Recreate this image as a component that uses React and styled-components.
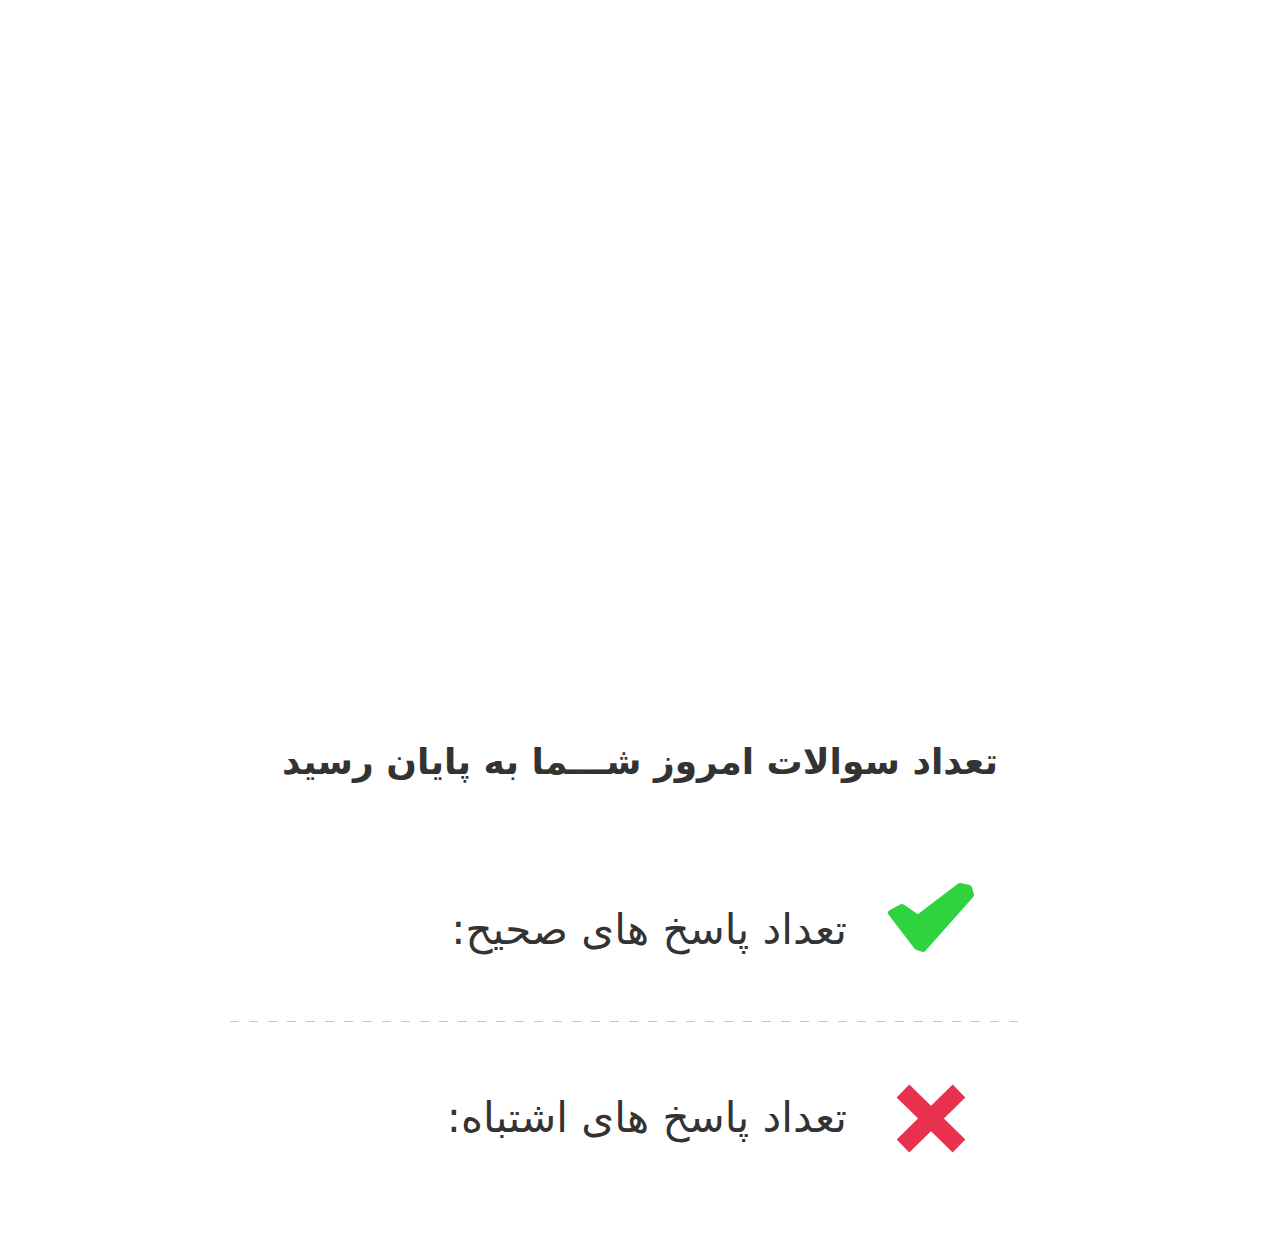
import React from "react";
import styled, { createGlobalStyle } from "styled-components";

const GlobalStyle = createGlobalStyle`
  html, body {
    margin: 0;
    padding: 0;
    background: #fff;
  }
  body {
    font-family: "DejaVu Sans", "Noto Sans", sans-serif;
    color: #333;
  }
`;

function CheckIcon() {
  return (
    <svg width="90" height="90" viewBox="0 0 90 90">
      <polygon
        points="6,33 17,27 33,38 75,6 84,8 86,15 38,69 32,67"
        fill="#2fd33e"
        stroke="#2fd33e"
        strokeWidth="6"
        strokeLinejoin="round"
      />
    </svg>
  );
}

function CrossIcon() {
  return (
    <svg width="90" height="90" viewBox="0 0 90 90">
      <g stroke="#e8304f" strokeWidth="18" strokeLinecap="butt">
        <line x1="18" y1="18" x2="74" y2="73" />
        <line x1="74" y1="18" x2="18" y2="73" />
      </g>
    </svg>
  );
}

function App() {
  const rows = [
    { label: "تعداد پاسخ های صحیح:", icon: <CheckIcon />, shift: 10 },
    { label: "تعداد پاسخ های اشتباه:", icon: <CrossIcon />, shift: 0 },
  ];

  return (
    <Page>
      <GlobalStyle />
      <Title>تعداد سوالات امروز شـــما به پایان رسید</Title>
      <Result>
        {rows.map((row, i) => (
          <React.Fragment key={i}>
            {i > 0 && <Divider />}
            <Row>
              <IconBox>{row.icon}</IconBox>
              <Label $shift={row.shift}>{row.label}</Label>
            </Row>
          </React.Fragment>
        ))}
      </Result>
    </Page>
  );
}

const Page = styled.div`
  width: 1280px;
  min-height: 1260px;
  padding-top: 732px;
  box-sizing: border-box;
  display: flex;
  flex-direction: column;
`;

const Title = styled.h1`
  margin: 0;
  direction: rtl;
  text-align: center;
  font-size: 36px;
  font-weight: bold;
  line-height: 60px;
  color: #333;
`;

const Result = styled.div`
  width: 790px;
  margin: 37px 0 0 230px;
  display: flex;
  flex-direction: column;
`;

const Row = styled.div`
  height: 192px;
  direction: rtl;
  display: flex;
  align-items: center;
  gap: 38px;
  padding-right: 45px;
`;

const IconBox = styled.div`
  width: 90px;
  height: 90px;
  flex-shrink: 0;
  display: flex;
`;

const Label = styled.span`
  font-size: 42px;
  line-height: 56px;
  color: #333;
  padding-top: ${(p) => p.$shift}px;
`;

const Divider = styled.div`
  height: 1px;
  background-image: linear-gradient(to right, #c4c4c4 50%, transparent 50%);
  background-size: 19px 1px;
  background-repeat: repeat-x;
`;

export default App;
